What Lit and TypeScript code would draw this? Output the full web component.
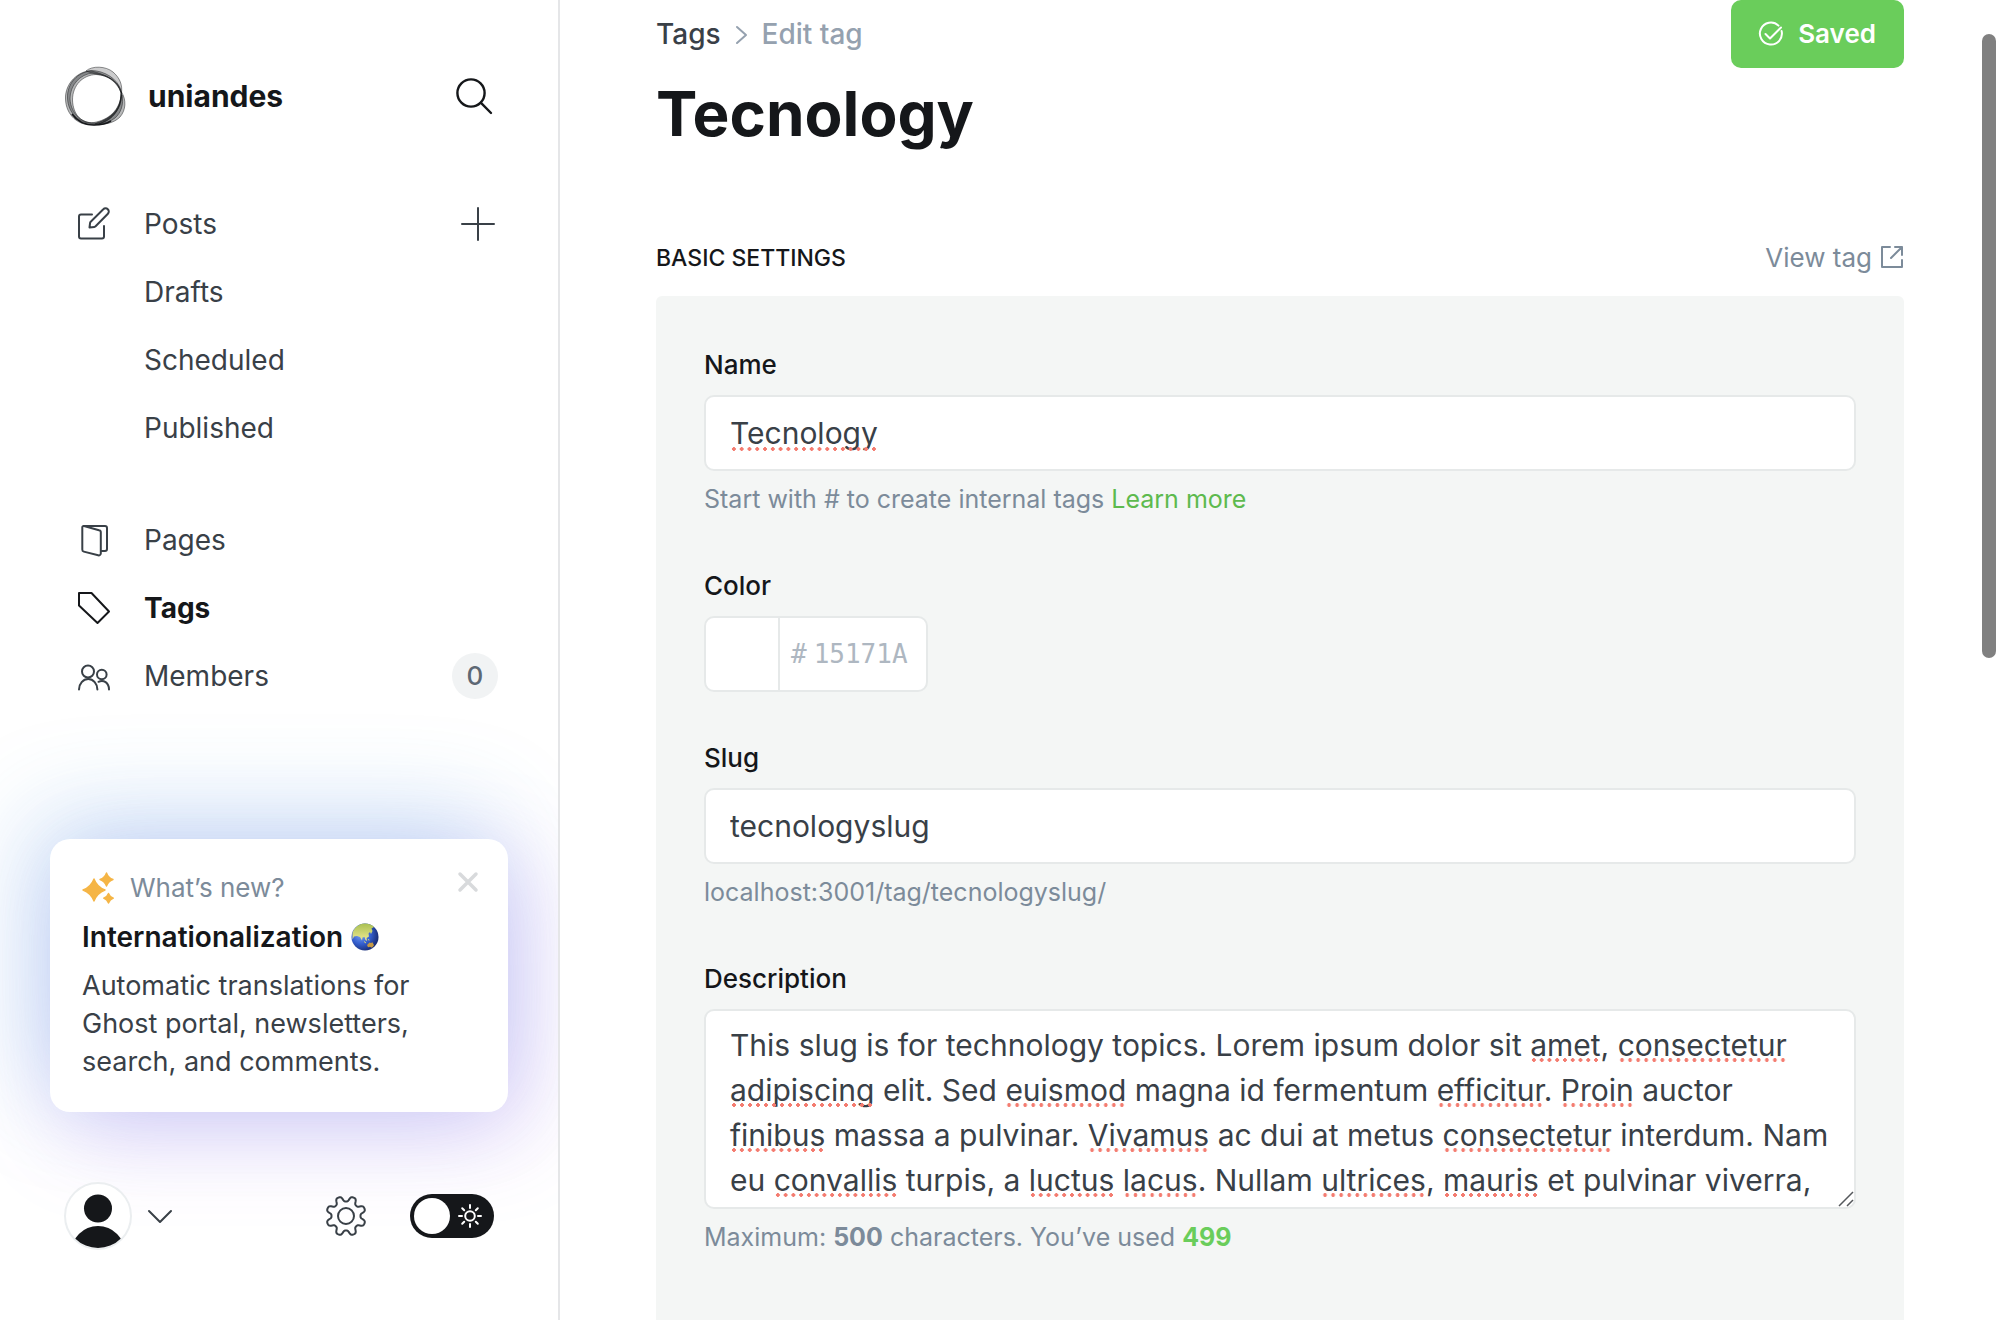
import { LitElement, html, css, svg, nothing } from "lit";
import { customElement, state } from "lit/decorators.js";

interface NavItem {
  label: string;
  icon?: unknown;
  active?: boolean;
  count?: number;
  add?: boolean;
}

interface Mark {
  x: number;
  y: number;
  width: number;
}

const editIcon = svg`<path d="M14 6.500H3a2 2 0 0 0-2 2v20a2 2 0 0 0 2 2h21a2 2 0 0 0 2-2V18"/><path d="M11.500 19.500l.6-4.600a2 2 0 0 1 .6-1.200L25.300 1.300a3 3 0 0 1 4.600 4.400L17.600 18.300a2 2 0 0 1-1.200.6z"/>`;
const pagesIcon = svg`<path d="M6 2h21a2 2 0 0 1 2 2v21a2 2 0 0 1-2 2h-4"/><path d="M6 2l15 4.200a2 2 0 0 1 1.800 2V29.500a2 2 0 0 1-2.600 1.800L5.800 27.600a2 2 0 0 1-1.500-2V3.500A1.500 1.500 0 0 1 6 2z"/>`;
const tagIcon = svg`<path d="M1 1h12.500L31 19.500 19.500 31 1 13.500z"/>`;
const membersIcon = svg`<circle cx="10" cy="11.500" r="6"/><path d="M1 29.500a9.200 10.500 0 0 1 18.400 0"/><circle cx="23.800" cy="14.500" r="4.800"/><path d="M20.500 21.800c5-2.600 10.500 1 10.500 7.700"/>`;

// Outline of an eight-toothed cog centred in a 40-unit box.
const gearPath = (() => {
  const pts: string[] = [];
  for (let i = 0; i < 240; i++) {
    const a = (i / 240) * Math.PI * 2;
    const wave = Math.tanh(1.8 * Math.cos(8 * (a - Math.PI / 8))) / Math.tanh(1.8);
    const r = 17.2 + 2.7 * wave;
    pts.push(`${(20 + r * Math.sin(a)).toFixed(2)} ${(20 + r * Math.cos(a)).toFixed(2)}`);
  }
  return `M${pts.join("L")}Z`;
})();

const DESCRIPTION =
  "This slug is for technology topics. Lorem ipsum dolor sit amet, consectetur adipiscing elit. Sed euismod magna id fermentum efficitur. Proin auctor finibus massa a pulvinar. Vivamus ac dui at metus consectetur interdum. Nam eu convallis turpis, a luctus lacus. Nullam ultrices, mauris et pulvinar viverra,";

const UNKNOWN_WORDS =
  /\b(Tecnology|amet|consectetur|adipiscing|euismod|efficitur|Proin|finibus|Vivamus|convallis|luctus|lacus|ultrices|mauris)\b/;

// Lays the field's text out in a temporary copy and reads where each unknown word falls.
const findMarks = (field: HTMLElement, text: string): Mark[] => {
  const copy = document.createElement("div");
  copy.className = "measure";
  const words: HTMLElement[] = [];
  text.split(UNKNOWN_WORDS).forEach((part, i) => {
    const span = document.createElement("span");
    span.textContent = part;
    if (i % 2) words.push(span);
    copy.append(span);
  });
  field.parentElement!.append(copy);
  const box = copy.getBoundingClientRect();
  const marks = words.map((word) => {
    const r = word.getBoundingClientRect();
    return { x: r.left - box.left, y: (r.top + r.bottom) / 2 - box.top + 13, width: r.width };
  });
  copy.remove();
  return marks;
};

@customElement("app-root")
export class AppRoot extends LitElement {
  @state() private name = "Tecnology";
  @state() private description = DESCRIPTION;
  @state() private marks: Record<string, Mark[]> = {};

  private groups: NavItem[][] = [
    [{ label: "Posts", icon: editIcon, add: true }, { label: "Drafts" }, { label: "Scheduled" }, { label: "Published" }],
    [
      { label: "Pages", icon: pagesIcon },
      { label: "Tags", icon: tagIcon, active: true },
      { label: "Members", icon: membersIcon, count: 0 },
    ],
  ];

  static styles = css`
    :host {
      display: grid;
      grid-template-columns: 560px minmax(0, 1fr);
      height: 100vh;
      overflow: hidden;
      position: relative;
      background: #fff;
      color: #15171a;
      font-family: Inter, "Liberation Sans", sans-serif;
      font-size: 26px;
      line-height: 32px;
    }
    * { box-sizing: border-box; }
    h1, h2, h3, p, ul { margin: 0; padding: 0; }
    ul { list-style: none; }
    a { color: inherit; text-decoration: none; }
    button { font: inherit; border: 0; padding: 0; background: none; color: inherit; display: flex; align-items: center; cursor: pointer; }
    svg { display: block; flex: none; overflow: visible; }
    .line { fill: none; stroke: currentColor; stroke-width: 2; stroke-linecap: round; stroke-linejoin: round; }

    .sidebar { display: flex; flex-direction: column; border-right: 2px solid #e5e6e8; overflow: hidden; }
    .brand { display: flex; align-items: center; gap: 22px; padding: 64px 66px 0 64px; height: 128px; font-size: 30px; font-weight: 700; }
    .brand button { margin-left: auto; }
    .search { stroke-width: 2.4; }
    nav { display: flex; flex-direction: column; gap: 44px; padding: 62px 60px 0 78px; color: #394047; font-size: 28px; }
    .row { display: flex; align-items: center; height: 68px; }
    .row a { display: flex; align-items: center; flex: 1; height: 100%; gap: 34px; }
    .slot { width: 32px; height: 32px; }
    .row .active { color: #15171a; font-weight: 700; }
    .add { margin-right: 3px; }
    .count { width: 46px; height: 46px; border-radius: 50%; background: #f1f3f4; color: #5d6874; font-size: 26px; font-weight: 500; display: grid; place-items: center; }

    .foot { margin-top: auto; padding: 0 50px 70px; }
    .toast {
      border-radius: 20px;
      background: #fff;
      padding: 30px 32px 31px;
      color: #394047;
      font-size: 27px;
      line-height: 38px;
      box-shadow: -16px -20px 100px rgba(60, 150, 220, 0.27), 16px 20px 90px rgba(155, 90, 235, 0.28);
    }
    .toast-head { display: flex; gap: 16px; align-items: center; color: #7c8b9a; font-size: 26px; }
    .toast-head button { margin: 0 -2px 12px auto; color: #d8dadc; }
    .close { stroke-width: 3.5; }
    .toast-title { display: flex; align-items: center; gap: 8px; margin: 11px 0; font-size: 28px; line-height: 38px; font-weight: 600; color: #15171a; }
    .stars { fill: #f5b546; stroke: #f5b546; stroke-width: 1.4; stroke-linejoin: round; }
    .tools { display: flex; align-items: center; padding: 70px 14px 0; color: #394047; }
    .user { gap: 16px; }
    .avatar { border: 2px solid #ebeef0; border-radius: 50%; background: #fff; }
    .settings { margin-left: auto; margin-right: 44px; }
    .theme { width: 84px; height: 44px; border-radius: 22px; background: #15171a; color: #fff; padding: 0 12px 0 4px; justify-content: space-between; }
    .knob { width: 36px; height: 36px; border-radius: 50%; background: #fff; }

    main { padding: 0 96px; overflow: hidden; display: flex; flex-direction: column; }
    .top { display: flex; justify-content: space-between; align-items: center; height: 68px; font-weight: 500; }
    .crumbs { display: flex; align-items: center; gap: 15px; color: #394047; font-size: 28px; }
    .muted { color: #95a1af; }
    .saved { gap: 15px; height: 68px; padding: 0 28px; border-radius: 10px; background: #6acd5b; color: #fff; font-weight: 600; }
    h1 { font-size: 62px; line-height: 76px; font-weight: 700; padding-top: 8px; }
    .section { display: flex; justify-content: space-between; align-items: center; padding: 90px 0 22px; }
    h2 { font-size: 23px; line-height: 32px; font-weight: 500; }
    .view { display: flex; align-items: center; gap: 10px; color: #7c8b9a; }
    .panel { flex: 1 0 auto; display: flex; flex-direction: column; gap: 50px; padding: 53px 48px; border-radius: 6px 6px 0 0; background: #f4f6f5; }
    label { display: block; font-weight: 500; margin-bottom: 14px; }
    .control { position: relative; display: flex; }
    input, textarea, .measure {
      display: block;
      width: 100%;
      margin: 0;
      padding: 0 24px;
      border: 2px solid #e6e9e9;
      border-radius: 10px;
      background: #fff;
      color: #394047;
      font: 400 30px/45px Inter, "Liberation Sans", sans-serif;
      outline: none;
    }
    input { height: 76px; }
    textarea { height: 200px; resize: none; overflow: hidden; }
    textarea, .measure { padding: 12px 24px; }
    .measure { position: absolute; inset: 0; visibility: hidden; white-space: pre-wrap; }
    .mark {
      position: absolute;
      height: 4px;
      pointer-events: none;
      background: radial-gradient(circle closest-side, #f47c70 85%, transparent) 0 0 / 8px 4px round;
    }
    .grip { position: absolute; right: 3px; bottom: 3px; stroke: #55585c; stroke-width: 1.5; pointer-events: none; }
    .hint { margin-top: 7px; font-size: 25px; line-height: 42px; color: #7c8b9a; }
    .learn { color: #5dba4e; }
    .used { color: #6acd5b; }
    .color { display: flex; width: 224px; height: 76px; border: 2px solid #e6e9e9; border-radius: 10px; background: #fff; color: #aeb7c1; overflow: hidden; align-items: center; font-family: "DejaVu Sans Mono", monospace; }
    .color button { flex: none; width: 74px; height: 100%; border-right: 2px solid #e6e9e9; margin-right: 11px; }
    .color input { border: 0; padding: 0 0 0 7px; height: 72px; color: #aeb7c1; background: none; font: inherit; min-width: 0; }
    .color input::placeholder { color: #aeb7c1; opacity: 1; }
    .scroll { position: absolute; right: 4px; top: 34px; width: 14px; height: 624px; border-radius: 7px; background: #808080; }
  `;

  private resize = () => this.measure();

  connectedCallback() {
    super.connectedCallback();
    window.addEventListener("resize", this.resize);
  }

  disconnectedCallback() {
    window.removeEventListener("resize", this.resize);
    super.disconnectedCallback();
  }

  protected updated(changed: Map<string, unknown>) {
    if (changed.has("name") || changed.has("description")) this.measure();
  }

  private measure() {
    const field = (id: string) => this.renderRoot.querySelector<HTMLElement>(`#${id}`)!;
    const name = findMarks(field("name"), this.name).map((m) => ({ ...m, y: m.y + 3 }));
    this.marks = { name, description: findMarks(field("description"), this.description) };
  }

  private underlines(id: string) {
    return (this.marks[id] ?? []).map(
      (m) => html`<span class="mark" style="left:${Math.round(m.x)}px;top:${Math.round(m.y)}px;width:${Math.round(m.width)}px"></span>`
    );
  }

  private navRow(item: NavItem) {
    return html`<li class="row">
      <a href="#" class=${item.active ? "active" : ""}>
        <svg class="line slot" viewBox="0 0 32 32" aria-hidden="true">${item.icon ?? nothing}</svg>${item.label}
      </a>
      ${item.add
        ? html`<button class="add" aria-label="New post"><svg class="line" width="34" height="34" viewBox="0 0 34 34"><path d="M17 1v32M1 17h32" /></svg></button>`
        : nothing}
      ${item.count !== undefined ? html`<span class="count">${item.count}</span>` : nothing}
    </li>`;
  }

  private logo() {
    return html`<svg width="62" height="62" viewBox="0 0 62 62" fill="none" stroke="#15171a" aria-hidden="true">
      <g fill="#15171a" fill-rule="evenodd" fill-opacity=".3" stroke-opacity=".6" stroke-width=".8">
        <path d="M1.500 34C1 18 14 6 28 5.500 40 6 54 13 57.500 27 58 45 46 58 30 60 14 61 2 50 1.500 34zM8.500 35C8.500 20 19 10 32 9.500 44 10 55 17 57.500 28 56 46 44 55 30 57.500 18 59 9 50 8.500 35z" />
        <path d="M3.500 33C3 18 14 7 27 6c14 3 27 9 30 22 1 17-10 30-26 31C15 59 4 48 3.500 33zM6 34C6 20 16 9 29 8c13 1 26 8 28 20 0 16-9 26-25 30C18 59 7 49 6 34z" />
        <path d="M22 6C28 .5 42 1 49 7c7 6 9.500 13 8.500 21C53 18 46 12 37 10c-6-1-10-2-15-4z" fill-opacity=".22" />
        <path d="M57.500 27c5 8 4.500 18-1.500 25-6 6-15 8-25 7 12-4 23-12 25-22 1-4 1-7 1.500-10z" />
        <path d="M58 30c2 9-1 18-7 23-5 4-10 5-16 6 10-5 20-12 22-23z" />
      </g>
      <path d="M8 49c5 7 13 11 22 11 7 0 13-1.500 17-4" stroke-width="1.6" />
    </svg>`;
  }

  private sidebar() {
    return html`<aside class="sidebar">
      <header class="brand">
        ${this.logo()}<span>uniandes</span>
        <button aria-label="Search"><svg class="line search" width="36" height="36" viewBox="0 0 36 36"><circle cx="15" cy="15" r="13.600" /><path d="M25 24.800L35 35" /></svg></button>
      </header>
      <nav>${this.groups.map((g) => html`<ul>${g.map((i) => this.navRow(i))}</ul>`)}</nav>
      <div class="foot">
        <section class="toast">
          <div class="toast-head">
            <svg class="stars" width="32" height="32" viewBox="0 0 32 32" aria-hidden="true">
              <path d="M12 7Q15 15 23 18 15 21 12 29 9 21 1 18 9 15 12 7z" />
              <path d="M24.500 1Q26.200 6 31 7.500 26.200 9 24.500 14 22.800 9 18 7.500 22.800 6 24.500 1z" />
              <path d="M26.500 21.500Q27.800 25 31.300 26.200 27.800 27.500 26.500 31 25.200 27.500 21.700 26.200 25.200 25 26.500 21.500z" />
            </svg>
            <span>What’s new?</span>
            <button aria-label="Dismiss"><svg class="line close" width="20" height="20" viewBox="0 0 20 20"><path d="M2 2l16 16M18 2L2 18" /></svg></button>
          </div>
          <h3 class="toast-title">
            Internationalization
            <svg width="28" height="28" viewBox="0 0 28 28" role="img" aria-label="Globe">
              <defs>
                <radialGradient id="sea" cx=".35" cy=".4" r=".7"><stop offset="0" stop-color="#7fa8f0" /><stop offset=".5" stop-color="#3560d0" /><stop offset="1" stop-color="#142568" /></radialGradient>
                <linearGradient id="land" x2="0" y2="1"><stop offset="0" stop-color="#a9c052" /><stop offset="1" stop-color="#f0ea92" /></linearGradient>
              </defs>
              <circle cx="14" cy="14" r="13.500" fill="url(#sea)" />
              <path d="M1.500 10C3 4.500 8 .8 13.500.5 18 .5 21 2 23 4l-2.500 1.500 1 2.500-1.500 3-1-2-1.500 1.500.5 3-2.500 1.500.5 3-1.500-1-1-3-2 .5-.5 3-2-3.500L6 13l-3 .5-1.500 3z" fill="url(#land)" />
              <path d="M13 18.500l2 1.500M17.500 16l.5 1.500" stroke="#d9d27a" />
              <path d="M16 22l2.500-2.500 1.500.5 1.500-.8 1.500 3-2 2.500-2-1-2 .5z" fill="#c59a45" />
            </svg>
          </h3>
          <p>Automatic translations for Ghost portal, newsletters, search, and comments.</p>
        </section>
        <div class="tools">
          <button class="user" aria-label="Account menu">
            <svg class="avatar" width="68" height="68" viewBox="2 2 64 64"><clipPath id="face"><circle cx="34" cy="34" r="32" /></clipPath><g fill="#15171a" clip-path="url(#face)"><circle cx="34" cy="26.500" r="14" /><circle cx="34" cy="71" r="27" /></g></svg>
            <svg class="line" width="24" height="14" viewBox="0 0 24 14"><path d="M1 2l11 11L23 2" /></svg>
          </button>
          <button class="settings" aria-label="Settings"><svg class="line" width="40" height="40" viewBox="0 0 40 40"><path d=${gearPath} /><circle cx="20" cy="20" r="8" /></svg></button>
          <button class="theme" role="switch" aria-checked="false" aria-label="Night shift">
            <span class="knob"></span>
            <svg class="line" width="24" height="24" viewBox="0 0 24 24"><circle cx="12" cy="12" r="4.800" /><path d="M12 1v3M12 20v3M1 12h3M20 12h3M4.200 4.200l2 2M17.800 17.800l2 2M19.800 4.200l-2 2M6.200 17.800l-2 2" /></svg>
          </button>
        </div>
      </div>
    </aside>`;
  }

  render() {
    return html`
      ${this.sidebar()}
      <main>
        <div class="top">
          <div class="crumbs">
            <a href="#">Tags</a>
            <svg class="line muted" width="11" height="18" viewBox="0 0 11 18"><path d="M1 2l9 8-9 8" /></svg>
            <span class="muted">Edit tag</span>
          </div>
          <button class="saved">
            <svg class="line" width="24" height="24" viewBox="0 0 24 24"><path d="M19.500 3.600A11 11 0 1 0 22.600 9" /><path d="M6.500 12l4.500 4.500L22 5.500" /></svg>
            Saved
          </button>
        </div>
        <h1>Tecnology</h1>
        <div class="section">
          <h2>BASIC SETTINGS</h2>
          <a class="view" href="#">View tag
            <svg class="line" width="22" height="22" viewBox="0 0 22 22"><path d="M8 0H0v20h20v-7M13 0h7v8M20 0L9 11" /></svg>
          </a>
        </div>
        <form class="panel">
          <div>
            <label for="name">Name</label>
            <div class="control">
              <input id="name" spellcheck="false" .value=${this.name} @input=${(e: Event) => (this.name = (e.target as HTMLInputElement).value)} />
              ${this.underlines("name")}
            </div>
            <p class="hint">Start with # to create internal tags <a class="learn" href="#">Learn more</a></p>
          </div>
          <div>
            <label for="color">Color</label>
            <div class="color">
              <button type="button" aria-label="Pick a color"></button>#
              <input id="color" placeholder="15171A" />
            </div>
          </div>
          <div>
            <label for="slug">Slug</label>
            <input id="slug" value="tecnologyslug" spellcheck="false" />
            <p class="hint">localhost:3001/tag/tecnologyslug/</p>
          </div>
          <div>
            <label for="description">Description</label>
            <div class="control">
              <textarea id="description" spellcheck="false" .value=${this.description} @input=${(e: Event) => (this.description = (e.target as HTMLTextAreaElement).value)}></textarea>
              ${this.underlines("description")}
              <svg class="grip" width="14" height="14" viewBox="0 0 14 14"><path d="M0 14L14 0M8 14l6-6" /></svg>
            </div>
            <p class="hint">Maximum: <b>500</b> characters. You’ve used <b class="used">499</b></p>
          </div>
        </form>
      </main>
      <div class="scroll"></div>
    `;
  }
}
